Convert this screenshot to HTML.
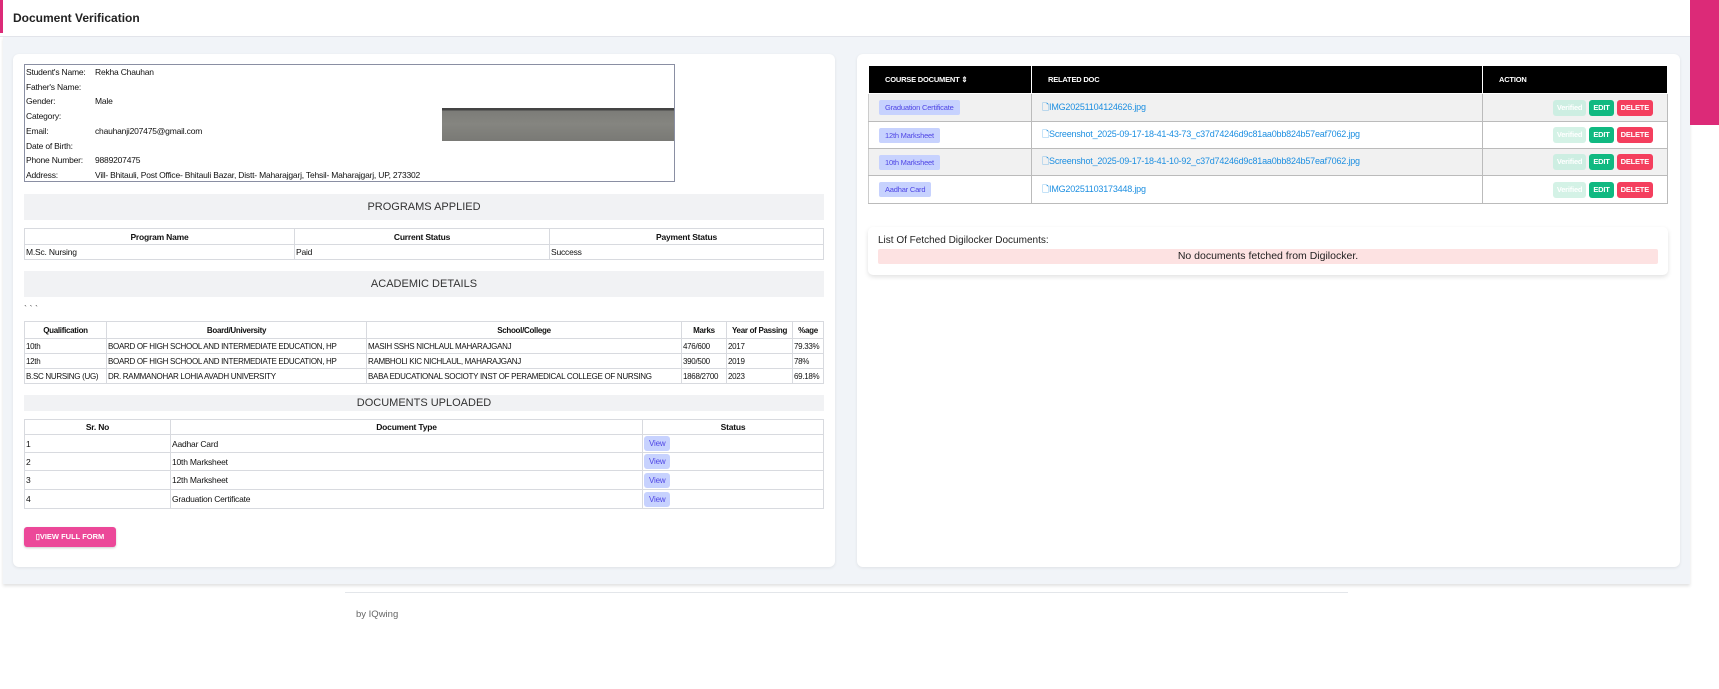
<!DOCTYPE html>
<html><head><meta charset="utf-8"><style>
*{box-sizing:border-box;margin:0;padding:0}
body{width:1719px;height:689px;position:relative;background:#fff;font-family:"Liberation Sans",sans-serif;color:#111;overflow:hidden}
.abs{position:absolute}
.hdr{left:0;top:0;width:1690px;height:37px;background:#fff;border-bottom:1px solid #e3e6ec}
.hdr span{position:absolute;left:13px;top:11px;font-size:12px;font-weight:bold;color:#222}
.bg{left:3px;top:37px;width:1687px;height:547px;background:#f1f4f8;box-shadow:0 2px 3px rgba(0,0,0,.12)}
.card{background:#fff;border-radius:6px;box-shadow:0 1px 3px rgba(0,0,0,.08)}
table{border-collapse:collapse;font-size:8.5px;table-layout:fixed;letter-spacing:-0.2px}
td,th{border:1px solid #d8dadf;padding:0 1px;text-align:left;white-space:nowrap;overflow:hidden}
th{text-align:center;font-weight:bold}
.bar{background:#f1f2f4;text-align:center;font-size:11px;color:#333}
.info{font-size:8.5px;line-height:14.7px;letter-spacing:-0.2px}
.view{display:inline-block;background:#c7d2fe;color:#4f46e5;border-radius:3px;font-size:8px;padding:0 5px;height:15px;line-height:15px}
.rt th{background:#000;color:#fff;font-size:7.5px;text-align:left;padding-left:16px;border:1px solid #fff}
.rt td{border:1px solid #bbb;border-left:1px solid #ccc;font-size:9px;padding-left:10px}
.badge{display:inline-block;background:#c7d2fe;color:#4f46e5;font-size:7.5px;padding:0 6px;height:15px;line-height:15px;border-radius:2px}
.lnk{color:#1d8fe1}
.btn{display:inline-block;height:16px;line-height:16px;font-size:7.5px;font-weight:bold;color:#fff;border-radius:3px;padding:0 4px;margin-left:3px}
</style></head><body>
<div class="abs hdr"><span>Document Verification</span></div>
<div class="abs" style="left:0;top:0;width:3px;height:33px;background:#dc2a78"></div>
<div class="abs bg"></div>
<div class="abs" style="left:1690px;top:0;width:29px;height:125px;background:#dc2a78"></div>

<div class="abs card" style="left:13px;top:54px;width:822px;height:513px"></div>
<div class="abs info" style="left:24px;top:64px;width:651px;height:118px;border:1px solid #8a8fa3;padding:0 0 0 1px">
<div>Student's Name:<span class="abs" style="left:70px">Rekha Chauhan</span></div>
<div>Father's Name:</div>
<div>Gender:<span class="abs" style="left:70px">Male</span></div>
<div>Category:</div>
<div>Email:<span class="abs" style="left:70px">chauhanji207475@gmail.com</span></div>
<div>Date of Birth:</div>
<div>Phone Number:<span class="abs" style="left:70px">9889207475</span></div>
<div>Address:<span class="abs" style="left:70px">Vill- Bhitauli, Post Office- Bhitauli Bazar, Distt- Maharajgarj, Tehsil- Maharajgarj, UP, 273302</span></div>
<div class="abs" style="left:417px;top:43px;width:232px;height:33px;background:linear-gradient(#444 0,#444 2px,#7c7c78 3px,#858580 16px,#7a7a76 32px)"></div>
</div>
<div class="abs bar" style="left:24px;top:194px;width:800px;height:26px;line-height:26px">PROGRAMS APPLIED</div>
<table class="abs" style="left:24px;top:228px;width:800px">
<tr style="height:16px"><th style="width:270px">Program Name</th><th style="width:255px">Current Status</th><th>Payment Status</th></tr>
<tr style="height:15px"><td>M.Sc. Nursing</td><td>Paid</td><td>Success</td></tr></table>
<div class="abs bar" style="left:24px;top:271px;width:800px;height:26px;line-height:26px">ACADEMIC DETAILS</div>
<div class="abs" style="left:24px;top:304px;font-size:9px;color:#555">` ` `</div>
<table class="abs" style="left:24px;top:321px;width:800px;font-size:8px;letter-spacing:-0.3px">
<tr style="height:17px"><th style="width:82px">Qualification</th><th style="width:260px">Board/University</th><th style="width:315px">School/College</th><th style="width:45px">Marks</th><th style="width:66px">Year of Passing</th><th>%age</th></tr>
<tr style="height:15px"><td>10th</td><td>BOARD OF HIGH SCHOOL AND INTERMEDIATE EDUCATION, HP</td><td>MASIH SSHS NICHLAUL MAHARAJGANJ</td><td>476/600</td><td>2017</td><td>79.33%</td></tr>
<tr style="height:15px"><td>12th</td><td>BOARD OF HIGH SCHOOL AND INTERMEDIATE EDUCATION, HP</td><td>RAMBHOLI KIC NICHLAUL, MAHARAJGANJ</td><td>390/500</td><td>2019</td><td>78%</td></tr>
<tr style="height:15px"><td>B.SC NURSING (UG)</td><td>DR. RAMMANOHAR LOHIA AVADH UNIVERSITY</td><td>BABA EDUCATIONAL SOCIOTY INST OF PERAMEDICAL COLLEGE OF NURSING</td><td>1868/2700</td><td>2023</td><td>69.18%</td></tr></table>
<div class="abs bar" style="left:24px;top:395px;width:800px;height:16px;line-height:16px">DOCUMENTS UPLOADED</div>
<table class="abs" style="left:24px;top:419px;width:800px">
<tr style="height:15px"><th style="width:146px">Sr. No</th><th style="width:472px">Document Type</th><th>Status</th></tr>
<tr style="height:18px"><td>1</td><td>Aadhar Card</td><td><span class="view">View</span></td></tr>
<tr style="height:18px"><td>2</td><td>10th Marksheet</td><td><span class="view">View</span></td></tr>
<tr style="height:19px"><td>3</td><td>12th Marksheet</td><td><span class="view">View</span></td></tr>
<tr style="height:19px"><td>4</td><td>Graduation Certificate</td><td><span class="view">View</span></td></tr></table>
<div class="abs" style="left:24px;top:527px;width:92px;height:20px;background:#ec4899;border-radius:3px;color:#fff;font-size:7.5px;font-weight:bold;line-height:20px;text-align:center;box-shadow:0 1px 2px rgba(0,0,0,.2)">▯VIEW FULL FORM</div>

<div class="abs card" style="left:857px;top:54px;width:823px;height:513px"></div>
<table class="abs rt" style="left:868px;top:65px;width:800px">
<tr style="height:28px"><th style="width:163px">COURSE DOCUMENT ⇕</th><th style="width:451px">RELATED DOC</th><th>ACTION</th></tr>
<tr style="height:28px;background:#f1f1f1"><td><span class="badge">Graduation Certificate</span></td><td class="lnk">🗋IMG20251104124626.jpg</td><td style="text-align:right;padding-right:14px"><span class="btn" style="background:#cdeee2">Verified</span><span class="btn" style="background:#10b981">EDIT</span><span class="btn" style="background:#f43f5e">DELETE</span></td></tr>
<tr style="height:27px"><td><span class="badge">12th Marksheet</span></td><td class="lnk">🗋Screenshot_2025-09-17-18-41-43-73_c37d74246d9c81aa0bb824b57eaf7062.jpg</td><td style="text-align:right;padding-right:14px"><span class="btn" style="background:#d4f2e6">Verified</span><span class="btn" style="background:#10b981">EDIT</span><span class="btn" style="background:#f43f5e">DELETE</span></td></tr>
<tr style="height:27px;background:#f1f1f1"><td><span class="badge">10th Marksheet</span></td><td class="lnk">🗋Screenshot_2025-09-17-18-41-10-92_c37d74246d9c81aa0bb824b57eaf7062.jpg</td><td style="text-align:right;padding-right:14px"><span class="btn" style="background:#cdeee2">Verified</span><span class="btn" style="background:#10b981">EDIT</span><span class="btn" style="background:#f43f5e">DELETE</span></td></tr>
<tr style="height:28px"><td><span class="badge">Aadhar Card</span></td><td class="lnk">🗋IMG20251103173448.jpg</td><td style="text-align:right;padding-right:14px"><span class="btn" style="background:#d4f2e6">Verified</span><span class="btn" style="background:#10b981">EDIT</span><span class="btn" style="background:#f43f5e">DELETE</span></td></tr></table>
<div class="abs" style="left:868px;top:227px;width:800px;height:48px;background:#fff;border-radius:5px;box-shadow:0 2px 5px rgba(0,0,0,.12)">
<div class="abs" style="left:10px;top:8px;font-size:10px;color:#222">List Of Fetched Digilocker Documents:</div>
<div class="abs" style="left:10px;top:22px;width:780px;height:15px;background:#fde2e2;border-radius:2px;text-align:center;font-size:10.5px;line-height:15px;color:#222">No documents fetched from Digilocker.</div>
</div>
<div class="abs" style="left:345px;top:592px;width:1003px;height:1px;background:#e3e6ea"></div>
<div class="abs" style="left:356px;top:609px;font-size:9.5px;color:#666">by IQwing</div>
</body></html>
